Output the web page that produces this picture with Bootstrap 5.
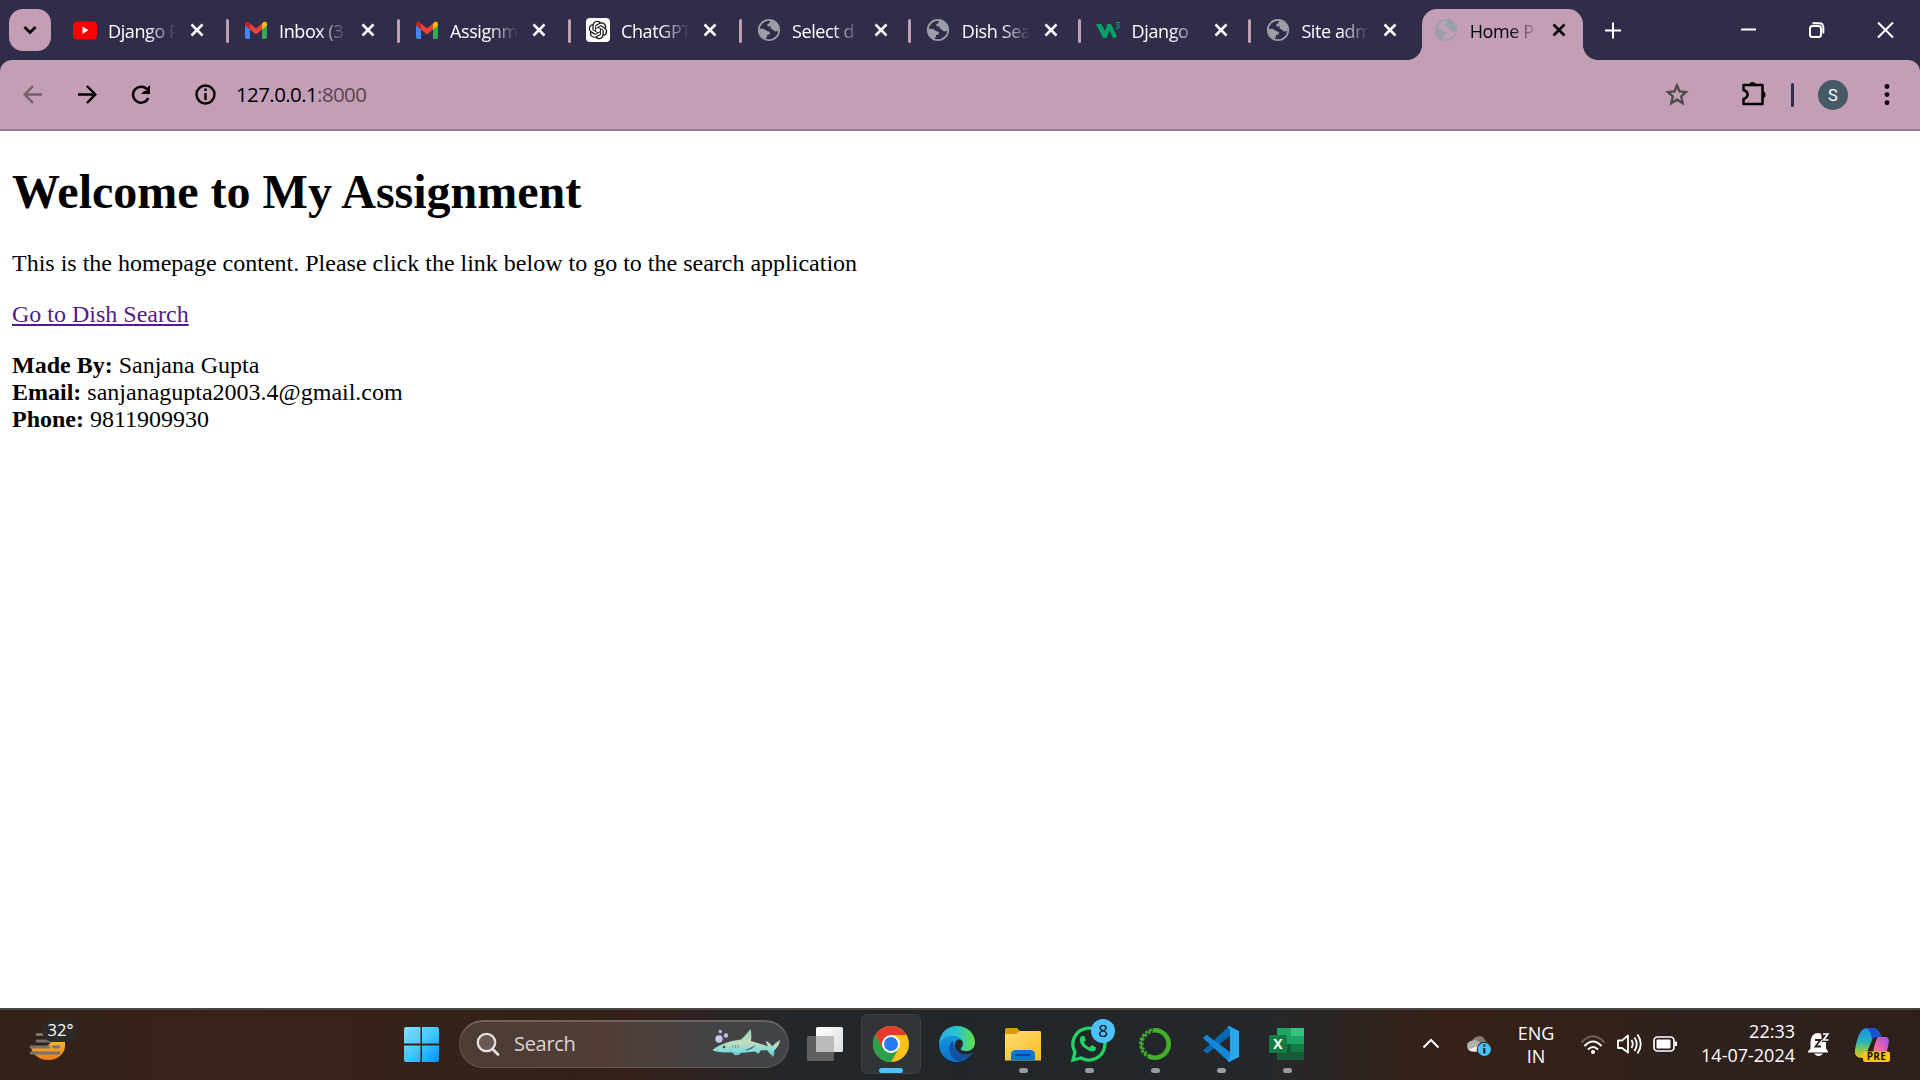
<!DOCTYPE html>
<html lang="en">
<head>
<meta charset="utf-8">
<title>Home Page</title>
<link href="https://cdn.jsdelivr.net/npm/bootstrap@5.3.0/dist/css/bootstrap.min.css" rel="stylesheet">
<style>
html,body{height:100%;overflow:hidden}
body{font-family:"Open Sans","Noto Sans",sans-serif;color:#000;background:#fff}
svg{display:block;flex:none}
.strip{height:60px;background:#302d4b;padding-left:9px}
.tab-menu{width:42px;height:42px;margin:9px 6.5px 0 0;border-radius:14px;background:#c39eb5}
.tab-item{width:171px;height:60px;flex:none;color:#fff;padding-left:15px}
.tab-item.slim{width:169.8px}
.tab-item .fav{width:24px;margin-right:11.500px}
.tab-title{width:68px;height:60px;line-height:62px;font-size:18px;letter-spacing:-.4px;white-space:nowrap;overflow:hidden;-webkit-mask-image:linear-gradient(90deg,#000 58%,transparent 100%);mask-image:linear-gradient(90deg,#000 58%,transparent 100%)}
.tab-x{margin-left:14px}
.tab-sep{width:3px;height:24px;border-radius:2px;background:#c39eb5;margin-left:auto;margin-top:2px}
.tab-item.current{width:161.5px;margin-left:1px;height:51px;margin-top:9px;padding:0 0 0 12.500px;background:#c39eb5;color:#000;border-radius:15px 15px 0 0;position:relative}
.tab-item.current>*{margin-top:-9px}
.tab-item.current::before,.tab-item.current::after{content:"";position:absolute;bottom:0;width:15px;height:15px;margin:0}
.tab-item.current::before{left:-15px;background:radial-gradient(circle at 0 0,transparent 14.6px,#c39eb5 15.2px)}
.tab-item.current::after{right:-15px;background:radial-gradient(circle at 100% 0,transparent 14.6px,#c39eb5 15.2px)}
.under{background:#302d4b}
.toolbar{height:71px;background:#c39eb5;border-bottom:2px solid #957a8b;border-radius:12px 12px 0 0}
.address{font-size:20.5px;letter-spacing:-.6px;line-height:68px;height:69px;margin-left:7px}
.address span{color:#57454f}
.page-view{font-family:"Liberation Serif",serif;height:877px;padding:0 12px;font-size:24px;line-height:27px;overflow:hidden}
.page-view h1{font-size:48px;font-weight:700;line-height:55px;margin:33px 0 31px}
.page-view p{margin:0 0 24px}
.page-view a{color:#551a8b}
.taskbar{height:72px;color:#fff;background:linear-gradient(90deg,#332118 0,#38231a 12%,#332117 30%,#35211a 33%,#24272a 41%,#212629 50%,#25282a 66%,#2f241f 71%,#352117 75%,#33211a 84%,#2d211d 87%,#2f1f1b 100%);box-shadow:inset 0 2px #494542}
.search-box{width:330px;height:48px;margin:12px 3px 0 10px;border-radius:24px;background:linear-gradient(90deg,#4c3c34,#513d35 45%,#444345 75%,#414548);border:1px solid #615855;border-top:2px solid #6c625f;font-size:20px;color:#dad5d2}
.search-box span{line-height:44px;width:196px;letter-spacing:-.3px}
.two-line{font-size:18px;line-height:24px}
.lang{width:60px;padding-top:14px;line-height:23px}
.clock{width:109px;padding-top:11px}
</style>
</head>
<body class="d-flex flex-column">
<svg width="0" height="0" class="position-absolute" aria-hidden="true">
<defs>
<symbol id="x" viewBox="0 0 14 14"><path d="M1.500 1.500 12.500 12.500M12.500 1.500 1.500 12.500" stroke="currentColor" stroke-width="2.500" fill="none"/></symbol>
<symbol id="globe" viewBox="0 0 24 24"><circle cx="12" cy="12" r="10.200" fill="none" stroke="#9aa0a6" stroke-width="1.800"/><path fill="#9aa0a6" d="M13 3C16 2.500 20 5 21.500 9.500L21 13 18 13.500 15 11 13.500 10.500 14 8.500 11 8.500 10 6.500 12.500 5ZM2 10.500 7 11 10 13 13 14 12.500 16.500 10 17 10 19 8 21 3.500 17Z"/></symbol>
<symbol id="gmail" viewBox="0 0 24 24"><path fill="#4285f4" d="M1 6.500 6 10V21H3Q1 21 1 19Z"/><path fill="#34a853" d="M23 6.500 18 10V21H21Q23 21 23 19Z"/><path fill="#ea4335" d="M6 5.500 12 10.500 18 5.500V11.500L12 16.500 6 11.500Z"/><path fill="#c5221f" d="M1 7V6Q1 3 4 3.800L6 5.500V11.500L1 7.500Z"/><path fill="#fbbc04" d="M23 7V6Q23 3 20 3.800L18 5.500V11.500L23 7.500Z"/></symbol>
<linearGradient id="win" x2="1" y2="1"><stop stop-color="#83ddff"/><stop offset=".5" stop-color="#42c8ff"/><stop offset="1" stop-color="#098fff"/></linearGradient>
<linearGradient id="sun" x2="0" y2="1"><stop stop-color="#f7b92c"/><stop offset="1" stop-color="#f17a17"/></linearGradient>
<linearGradient id="shark" x2="0" y2="1"><stop stop-color="#9bd3bd"/><stop offset=".5" stop-color="#c3dcc0"/><stop offset=".8" stop-color="#7ddbe0"/><stop offset="1" stop-color="#5fb0ac"/></linearGradient>
<linearGradient id="edgeA"><stop stop-color="#2caee8"/><stop offset=".5" stop-color="#28c5ca"/><stop offset="1" stop-color="#66df47"/></linearGradient>
<linearGradient id="edgeB" x2="0" y2="1"><stop stop-color="#159ade"/><stop offset="1" stop-color="#0871cb"/></linearGradient>
<linearGradient id="fold" x2="1" y2="1"><stop stop-color="#ffdc75"/><stop offset="1" stop-color="#f9bd20"/></linearGradient>
<linearGradient id="tv" x2="1" y2="1"><stop stop-color="#fff"/><stop offset="1" stop-color="#ddd"/></linearGradient>
<linearGradient id="copA" x2="0" y2="1"><stop stop-color="#168fe3"/><stop offset=".45" stop-color="#28b3bd"/><stop offset=".75" stop-color="#93c846"/><stop offset="1" stop-color="#e9bd23"/></linearGradient>
<linearGradient id="copB" x1="1" x2="0" y2="1"><stop stop-color="#9a50f5"/><stop offset=".5" stop-color="#ed65aa"/><stop offset="1" stop-color="#ff8e5a"/></linearGradient>
</defs></svg>

<header class="strip d-flex flex-shrink-0">
  <div class="tab-menu d-flex align-items-center justify-content-center"><svg width="14" height="10" viewBox="0 0 14 10"><path d="M1.500 2 7 7.500 12.500 2" fill="none" stroke="#000" stroke-width="2.700"/></svg></div>
  <div class="tab-item d-flex align-items-center"><svg class="fav" height="24" viewBox="0 0 24 24"><rect y="3.500" width="24" height="18" rx="4" fill="#f00"/><path d="M9.500 8.500V16L15.500 12.300Z" fill="#fff"/></svg><div class="tab-title">Django P</div><svg class="tab-x" width="14" height="14"><use href="#x"/></svg><i class="tab-sep"></i></div>
  <div class="tab-item d-flex align-items-center"><svg class="fav" height="24"><use href="#gmail"/></svg><div class="tab-title">Inbox (3</div><svg class="tab-x" width="14" height="14"><use href="#x"/></svg><i class="tab-sep"></i></div>
  <div class="tab-item d-flex align-items-center"><svg class="fav" height="24"><use href="#gmail"/></svg><div class="tab-title">Assignm</div><svg class="tab-x" width="14" height="14"><use href="#x"/></svg><i class="tab-sep"></i></div>
  <div class="tab-item d-flex align-items-center"><svg class="fav" height="24" viewBox="0 0 24 24"><rect width="24" height="24" rx="4" fill="#fff"/><path transform="translate(2.800 2.800) scale(.77)" fill="#111" d="M22.2819 9.8211a5.9847 5.9847 0 0 0-.5157-4.9108 6.0462 6.0462 0 0 0-6.5098-2.9A6.0651 6.0651 0 0 0 4.9807 4.1818a5.9847 5.9847 0 0 0-3.9977 2.9 6.0462 6.0462 0 0 0 .7427 7.0966 5.98 5.98 0 0 0 .511 4.9107 6.051 6.051 0 0 0 6.5146 2.9001A5.9847 5.9847 0 0 0 13.2599 24a6.0557 6.0557 0 0 0 5.7718-4.2058 5.9894 5.9894 0 0 0 3.9977-2.9001 6.0557 6.0557 0 0 0-.7475-7.0729zm-9.022 12.6081a4.4755 4.4755 0 0 1-2.8764-1.0408l.1419-.0804 4.7783-2.7582a.7948.7948 0 0 0 .3927-.6813v-6.7369l2.02 1.1686a.071.071 0 0 1 .038.052v5.5826a4.504 4.504 0 0 1-4.4945 4.4944zm-9.6607-4.1254a4.4708 4.4708 0 0 1-.5346-3.0137l.142.0852 4.783 2.7582a.7712.7712 0 0 0 .7806 0l5.8428-3.3685v2.3324a.0804.0804 0 0 1-.0332.0615L9.74 19.9502a4.4992 4.4992 0 0 1-6.1408-1.6464zM2.3408 7.8956a4.485 4.485 0 0 1 2.3655-1.9728V11.6a.7664.7664 0 0 0 .3879.6765l5.8144 3.3543-2.0201 1.1685a.0757.0757 0 0 1-.071 0l-4.8303-2.7865A4.504 4.504 0 0 1 2.3408 7.872zm16.5963 3.8558L13.1038 8.364 15.1192 7.2a.0757.0757 0 0 1 .071 0l4.8303 2.7913a4.4944 4.4944 0 0 1-.6765 8.1042v-5.6772a.79.79 0 0 0-.407-.667zm2.0107-3.0231l-.142-.0852-4.7735-2.7818a.7759.7759 0 0 0-.7854 0L9.409 9.2297V6.8974a.0662.0662 0 0 1 .0284-.0615l4.8303-2.7866a4.4992 4.4992 0 0 1 6.6802 4.66zM8.3065 12.863l-2.02-1.1638a.0804.0804 0 0 1-.038-.0567V6.0742a4.4992 4.4992 0 0 1 7.3757-3.4537l-.142.0805L8.704 5.459a.7948.7948 0 0 0-.3927.6813zm1.0976-2.3654l2.602-1.4998 2.6069 1.4998v2.9994l-2.5974 1.4997-2.6067-1.4997Z"/></svg><div class="tab-title">ChatGPT</div><svg class="tab-x" width="14" height="14"><use href="#x"/></svg><i class="tab-sep"></i></div>
  <div class="tab-item slim d-flex align-items-center"><svg class="fav" height="24"><use href="#globe"/></svg><div class="tab-title">Select d</div><svg class="tab-x" width="14" height="14"><use href="#x"/></svg><i class="tab-sep"></i></div>
  <div class="tab-item slim d-flex align-items-center"><svg class="fav" height="24"><use href="#globe"/></svg><div class="tab-title">Dish Sea</div><svg class="tab-x" width="14" height="14"><use href="#x"/></svg><i class="tab-sep"></i></div>
  <div class="tab-item slim d-flex align-items-center"><svg class="fav" height="24" viewBox="0 0 24 24"><path d="M0 6H5.500L9 13 11.500 6H15L21 18 19 20H17L13.500 12.500 10.500 20H7Z" fill="#04a064"/><path d="M20 4.500H23.200L21.500 7Q23.300 7 23.200 8.700 23 10.500 20 10" fill="none" stroke="#04a064" stroke-width="1.200"/></svg><div class="tab-title">Django</div><svg class="tab-x" width="14" height="14"><use href="#x"/></svg><i class="tab-sep"></i></div>
  <div class="tab-item slim d-flex align-items-center"><svg class="fav" height="24"><use href="#globe"/></svg><div class="tab-title">Site adm</div><svg class="tab-x" width="14" height="14"><use href="#x"/></svg></div>
  <div class="tab-item current d-flex align-items-center"><svg class="fav" height="24"><use href="#globe"/></svg><div class="tab-title">Home P</div><svg class="tab-x" width="14" height="14"><use href="#x"/></svg></div>
  <svg class="ms-auto" width="320" height="60" viewBox="1600 0 320 60" fill="none" stroke="#fff" stroke-width="2"><path d="M1605 30.500H1621M1613 22.500V38.500M1741 29.500H1756M1878 22.500 1893 37.500M1893 22.500 1878 37.500"/><rect x="1810" y="26" width="11" height="11" rx="2.500"/><path d="M1812.500 23.200H1819Q1823.300 23.200 1823.300 27.500V33.500"/></svg>
</header>

<div class="under flex-shrink-0"><nav class="toolbar d-flex">
  <svg width="229" height="69" viewBox="0 60 229 69" fill="none" stroke="#000" stroke-width="2.400"><path stroke="#75606c" d="M42 94.500H25M33 86 24.700 94.500 33 103"/><path d="M78 94.500H95M87 86 95.300 94.500 87 103M148.300 98A8 8 0 1 1 147.500 90"/><path fill="#000" stroke="none" d="M150 85V94H141L144 91H147V88Z"/><circle cx="205.500" cy="94.500" r="9"/><path d="M205.500 93V100M205.500 88.500V91"/></svg>
  <div class="address">127.0.0.1<span>:8000</span></div>
  <svg class="ms-auto" width="260" height="69" viewBox="1660 60 260 69"><path fill="none" stroke="#4d494c" stroke-width="2.300" d="M1677 85.500 1679.600 91.500 1686 92.100 1681.200 96.500 1682.700 103.200 1677 99.700 1671.300 103.200 1672.800 96.500 1668 92.100 1674.400 91.500Z"/><path fill="none" stroke="#000" stroke-width="2.500" stroke-linejoin="round" d="M1743.500 85H1762.500V104H1743.500V99C1749 97 1749 92 1743.500 90Z"/><path d="M1749 84.500A3.700 3.700 0 0 1 1756 84.500ZM1762.500 91A3.700 3.700 0 0 1 1762.500 98.300Z"/><rect x="1791" y="83" width="3" height="24" rx="1.500" fill="#302d4b"/><circle cx="1833" cy="95" r="15" fill="#455a64"/><text x="1833" y="101" text-anchor="middle" font-family="Roboto" font-size="16.500" fill="#fff">S</text><g><circle cx="1887" cy="86.500" r="2.400"/><circle cx="1887" cy="94.600" r="2.400"/><circle cx="1887" cy="102.700" r="2.400"/></g></svg>
</nav></div>

<main class="page-view flex-shrink-0">
  <h1>Welcome to My Assignment</h1>
  <p>This is the homepage content. Please click the link below to go to the search application</p>
  <p><a href="#">Go to Dish Search</a></p>
  <p><b>Made By:</b> Sanjana Gupta<br><b>Email:</b> sanjanagupta2003.4@gmail.com<br><b>Phone:</b> 9811909930</p>
</main>

<footer class="taskbar d-flex flex-shrink-0">
  <svg width="394" height="72" viewBox="0 1008 394 72"><path d="M31 1047A17 14.500 0 0 0 65 1044V1040H52Q47 1049 40 1048Z" fill="url(#sun)"/><path d="M37 1034.500H48M37 1041H50M31 1047H49M53.500 1047H59M31 1053H59" stroke="#77736f" stroke-width="2.800" stroke-linecap="round"/><rect x="42" y="1019" width="36" height="23" rx="11.500" fill="#2c2b2a"/><text x="60.500" y="1036" text-anchor="middle" font-size="16.500" fill="#fff">32°</text></svg>
  <svg width="55" height="72" viewBox="394 1008 55 72"><path d="M404 1029Q404 1027 406 1027H420.500V1043.500H404ZM422 1027H437Q439 1027 439 1029V1043.500H422ZM404 1045.500H420.500V1062H406Q404 1062 404 1060ZM422 1045.500H439V1060Q439 1062 437 1062H422Z" fill="url(#win)"/></svg>
  <div class="search-box d-flex">
    <svg width="54" height="45" viewBox="460 1022 54 45"><circle cx="486.500" cy="1042.500" r="8.700" fill="#6a5851" stroke="#e3e0df" stroke-width="2.300"/><path d="M492.500 1049 498 1054.500" stroke="#e3e0df" stroke-width="2.800" stroke-linecap="round"/></svg>
    <span>Search</span>
    <svg width="77" height="45" viewBox="710 1022 77 45"><circle cx="719" cy="1039" r="3.700" fill="#c7c9ee"/><circle cx="726" cy="1035.500" r="2.200" fill="#b6c0e8"/><circle cx="720.300" cy="1031.500" r="1.700" fill="#b6c0e8"/><path fill="url(#shark)" d="M713 1049.500Q722 1042 741 1039.500 745 1036 750.500 1029 752 1034 751 1041 760 1043.500 768 1046.500L765.500 1041Q770 1042 772 1046.500 775 1043 780 1040 779 1047 774 1050.500 775 1054 773 1057 769 1053 767 1050L760.500 1050.500 758.500 1054 755 1051.500 741 1053Q739 1056 734.500 1055L732.500 1052.500Q720 1053 713 1050.500Z"/><path d="M745 1050Q750 1048 756 1045Q752 1050 746 1050.500" fill="#47727d"/><circle cx="724" cy="1047" r="1.300" fill="#633b46"/><path d="M733 1045V1048M735.500 1045V1048M738 1045V1048" stroke="#719990"/></svg>
  </div>
  <svg width="66" height="72" viewBox="792 1008 66 72"><rect x="807" y="1036" width="27" height="25" rx="1.500" fill="#5f5f5f"/><rect x="816" y="1027" width="27" height="25" rx="1.500" fill="url(#tv)"/><path d="M816 1036H834V1052H816Z" fill="#bbb"/></svg>
  <svg width="66" height="72" viewBox="858 1008 66 72"><rect x="861.500" y="1014.500" width="59" height="59" rx="6" fill="#303437" stroke="#3c4043"/><circle cx="891" cy="1044" r="18" fill="#fbc116"/><path fill="#2b9f49" d="M875.400 1035A18 18 0 0 0 891 1062L898.800 1048.500 891 1044 883.200 1048.500Z"/><path fill="#e33b2e" d="M883.200 1048.500 875.400 1035A18 18 0 0 1 906.600 1035H891Z"/><circle cx="891" cy="1044" r="9" fill="#fff"/><circle cx="891" cy="1044" r="7" fill="#2979f2"/><rect x="879" y="1068" width="24" height="5" rx="2.500" fill="#4cc2ff"/></svg>
  <svg width="66" height="72" viewBox="924 1008 66 72"><path fill="url(#edgeB)" d="M939 1044C940 1035 948 1030 957 1034 962 1037 963 1040 962 1041 957 1036 952 1044 957 1051 961 1056 968 1055 972 1053 967 1060 960 1063 955 1062 946 1061 939 1054 939 1044Z"/><path fill="#1452a0" d="M953 1041C947 1045 948 1058 959 1061.500 966 1061 971 1056 972.500 1053 966 1056 955 1055 953 1041Z"/><path fill="url(#edgeA)" d="M939 1043C940 1033 947 1026 957 1026 968 1026 975 1034 975 1042 975 1050 968 1053 961 1050 960 1048 963 1047 963 1043 962 1035 947 1032 939 1043Z"/></svg>
  <svg width="66" height="72" viewBox="990 1008 66 72"><path d="M1005 1029.500Q1005 1028 1007 1028H1017L1021 1032V1036H1005Z" fill="#dc9a0c"/><path d="M1005 1034H1016L1020 1031H1040Q1041 1031 1041 1033V1060.500H1005Z" fill="url(#fold)"/><path d="M1011 1060.500V1055Q1011 1050 1016 1050H1030Q1035 1050 1035 1055V1060.500Z" fill="#0878cf"/><path d="M1015.500 1055H1030" stroke="#064784" stroke-width="2"/><rect x="1019" y="1068" width="9" height="5" rx="2.500" fill="#999b9c"/></svg>
  <svg width="66" height="72" viewBox="1056 1008 66 72"><path d="M1073 1060 1075 1052A16 16 0 1 1 1081 1058Z" fill="none" stroke="#24d366" stroke-width="3.300"/><path transform="translate(1077 1033) scale(.93)" d="M5.500 3Q3 4 3 8 4 14 9.500 17 15 21 18 19.500 21 18 20.500 15.500L16 13 13.500 15.500Q9 14 7.500 9.500L9.500 8 8 3.500Z" fill="#24d366"/><circle cx="1103" cy="1031" r="12" fill="#4cc2ff"/><text x="1103" y="1037" text-anchor="middle" font-size="17" fill="#071015">8</text><rect x="1085" y="1068" width="9" height="5" rx="2.500" fill="#999b9c"/></svg>
  <svg width="66" height="72" viewBox="1122 1008 66 72" fill="none" stroke="#43b02a"><circle cx="1155" cy="1044" r="13.700" stroke-width="4.600"/><path d="M1147.500 1057A15 15 0 0 1 1153 1029" stroke="#22272a" stroke-width="1.500" stroke-dasharray="2 2.500"/><path d="M1148.500 1054.500A12.500 12.500 0 0 1 1154 1031.500" stroke="#22272a" stroke-width="1.500" stroke-dasharray="2.500 2"/><rect x="1151" y="1068" width="9" height="5" rx="2.500" fill="#999b9c" stroke="none"/></svg>
  <svg width="66" height="72" viewBox="1188 1008 66 72"><path d="M1203 1050.500 1207 1053.500 1230 1036V1026L1228 1027Z" fill="#0668b0"/><path d="M1203 1038 1206.500 1034.800 1230 1052V1062L1228 1061Z" fill="#1187d6"/><path d="M1229 1026 1239 1031V1057L1229 1062 1227.500 1061 1230 1058V1030L1227.500 1027Z" fill="#29a8f2"/><rect x="1217" y="1068" width="9" height="5" rx="2.500" fill="#999b9c"/></svg>
  <svg width="66" height="72" viewBox="1254 1008 66 72"><path d="M1277 1028H1291V1044H1277Z" fill="#21a366"/><path d="M1291 1028H1304V1036H1291Z" fill="#33c481"/><path d="M1291 1036H1304V1044H1291Z" fill="#21a366"/><path d="M1277 1044H1304V1060H1277Z" fill="#185c37"/><path d="M1291 1044H1304V1052H1291Z" fill="#107c41"/><rect x="1269" y="1035" width="18" height="18" rx="1.500" fill="#127c42"/><text x="1278" y="1049" text-anchor="middle" font-size="14" font-weight="700" fill="#fff">X</text><rect x="1283" y="1068" width="9" height="5" rx="2.500" fill="#999b9c"/></svg>
  <div class="d-flex ms-auto">
    <svg width="96" height="72" viewBox="1410 1008 96 72"><path d="M1423.500 1047.500 1431 1040 1438.500 1047.500" fill="none" stroke="#fff" stroke-width="2"/><path d="M1471 1042Q1474 1036 1480 1036 1484 1036.500 1485.500 1041 1490 1043 1490 1048L1480 1050Z" fill="#857b75"/><path d="M1473 1051.500Q1467 1051 1467 1046 1467 1041 1473 1040.500 1478 1039 1481 1044L1483 1051.500Z" fill="#b5afab"/><path d="M1468.500 1049.500 1478 1046 1484 1051.500H1473Q1470 1051.500 1468.500 1049.500Z" fill="#f0efed"/><circle cx="1484.300" cy="1049.300" r="7.600" fill="#33211a"/><circle cx="1484.300" cy="1049.300" r="6.600" fill="#4cc2ff"/><path d="M1484.300 1048V1053.500M1484.300 1044.500V1046.500" stroke="#102028" stroke-width="2"/></svg>
    <div class="two-line lang text-center">ENG<br>IN</div>
    <svg width="120" height="72" viewBox="1566 1008 120 72" fill="none" stroke="#fff" stroke-width="2"><path d="M1581.500 1042.500Q1593 1030 1604.500 1042.500" stroke="#6d625c"/><path d="M1584.500 1046Q1593 1037 1601.500 1046M1588 1049.500Q1593 1044.500 1598 1049.500"/><circle cx="1593" cy="1052" r="2" fill="#fff" stroke="none"/><path stroke-linejoin="round" stroke-width="1.800" d="M1618 1040.500H1622L1628 1035.500V1052.500L1622 1048H1618ZM1631.500 1040Q1634 1044 1631.500 1048M1634.500 1037.500Q1639 1044 1634.500 1051M1637.500 1034.500Q1644 1044 1637.500 1053.500"/><rect x="1654" y="1037" width="20" height="14" rx="3.500" stroke-width="1.700"/><rect x="1656.500" y="1039.500" width="14" height="9" rx="1" fill="#fff" stroke="none"/><path d="M1676 1041.500V1046"/></svg>
    <div class="two-line clock text-end">22:33<br>14-07-2024</div>
    <svg width="125" height="72" viewBox="1795 1008 125 72"><path d="M1808 1051.500 1810.500 1048.500V1042Q1811 1033 1818.500 1033 1826 1034 1826 1042V1048.500L1828 1051.500V1052.500H1808ZM1814 1053.500H1823Q1821 1056 1818.500 1056T1814 1053.500Z" fill="#fff"/><path d="M1815 1040H1820.500L1815.500 1046.500H1821" fill="none" stroke="#2f201b" stroke-width="1.800"/><path d="M1821 1032H1831V1042H1822Z" fill="#2f201b"/><path d="M1823 1034H1827.800L1823.500 1040H1828.500" fill="none" stroke="#fff" stroke-width="1.700"/><path d="M1862 1030Q1864 1028 1868 1028H1873Q1878 1028 1880 1034L1881 1037H1877Q1873 1037 1872 1041L1868 1055Q1866 1058 1862 1058 1854 1058 1855 1050 1857 1036 1862 1030Z" fill="url(#copA)"/><path d="M1867 1028H1873Q1878 1028 1880 1034L1881 1037H1877Q1873 1037 1872 1040 1871 1031 1867 1028Z" fill="#1851cb"/><path d="M1878 1037H1886Q1890 1038 1888.500 1044L1886 1055 1870 1058Q1872 1057 1874 1048 1875 1039 1878 1037Z" fill="url(#copB)"/><path d="M1873 1038H1877L1872 1052H1867Z" fill="#2f201b"/><rect x="1863" y="1051.500" width="27" height="10.500" rx="2.500" fill="#fdc60b"/><text x="1876.500" y="1060.300" text-anchor="middle" font-size="10" font-weight="700" letter-spacing=".4" fill="#111">PRE</text></svg>
  </div>
</footer>
<script src="https://cdn.jsdelivr.net/npm/bootstrap@5.3.0/dist/js/bootstrap.bundle.min.js"></script>
</body>
</html>
